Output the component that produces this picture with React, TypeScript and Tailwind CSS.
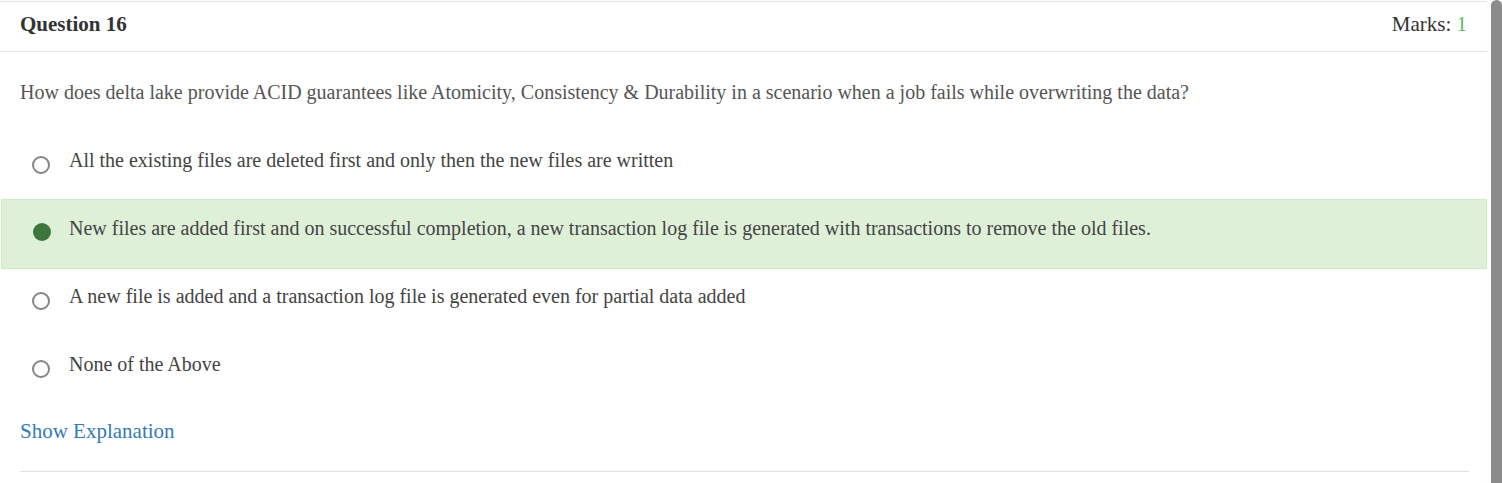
const OPTIONS = [
  { text: "All the existing files are deleted first and only then the new files are written", selected: false },
  {
    text: "New files are added first and on successful completion, a new transaction log file is generated with transactions to remove the old files.",
    selected: true,
  },
  { text: "A new file is added and a transaction log file is generated even for partial data added", selected: false },
  { text: "None of the Above", selected: false },
];

function Radio({ checked }: { checked: boolean }) {
  if (checked) {
    return <span className="mt-[8px] block h-[18px] w-[18px] shrink-0 rounded-full bg-[#3c763d]" />;
  }
  return <span className="mt-[9px] block h-[18px] w-[18px] shrink-0 rounded-full border-2 border-[#858585] bg-white" />;
}

export default function App() {
  return (
    <div className="flex h-[483px] w-[1502px] overflow-hidden bg-white font-['Liberation_Serif',serif]">
      <div className="w-[1487px] shrink-0">
        <div className="mt-px border-t border-[#e3e3e3]">
          <div className="flex h-[50px] items-start justify-between border-b border-[#e6e6e6] px-[20px] pt-[10px] text-[21px] leading-[24px] text-[#333]">
            <span className="font-bold">Question 16</span>
            <span>
              Marks: <span className="text-[#5cb85c]">1</span>
            </span>
          </div>

          <p className="px-[20px] pt-[27px] text-[20px] leading-[27px] text-[#555]">
            How does delta lake provide ACID guarantees like Atomicity, Consistency &amp; Durability in a scenario when a job fails while overwriting the data?
          </p>

          <div className="mt-[25px]">
            {OPTIONS.map((o) =>
              o.selected ? (
                <div
                  key={o.text}
                  className="-mb-[2px] ml-px flex h-[70px] items-start border border-[#d3e8c8] bg-[#dff0d8] pl-[31px] pt-[15px]"
                >
                  <Radio checked />
                  <span className="ml-[18px] text-[20px] leading-[27px] text-[#444]">{o.text}</span>
                </div>
              ) : (
                <div key={o.text} className="flex h-[68px] items-start pl-[32px] pt-[16px]">
                  <Radio checked={false} />
                  <span className="ml-[19px] text-[20px] leading-[27px] text-[#444]">{o.text}</span>
                </div>
              )
            )}
          </div>

          <div className="mt-[13px] px-[20px] text-[21px] leading-[30px] text-[#337ab7]">Show Explanation</div>
          <div className="ml-[20px] mr-[18px] mt-[25px] border-t border-[#e0e0e0]" />
        </div>
      </div>
      <div className="flex h-full w-[15px] justify-end bg-[#fdfdfd]">
        <div className="h-full w-[11px] rounded-t-[6px] bg-[#8b8b8b]" />
      </div>
    </div>
  );
}
